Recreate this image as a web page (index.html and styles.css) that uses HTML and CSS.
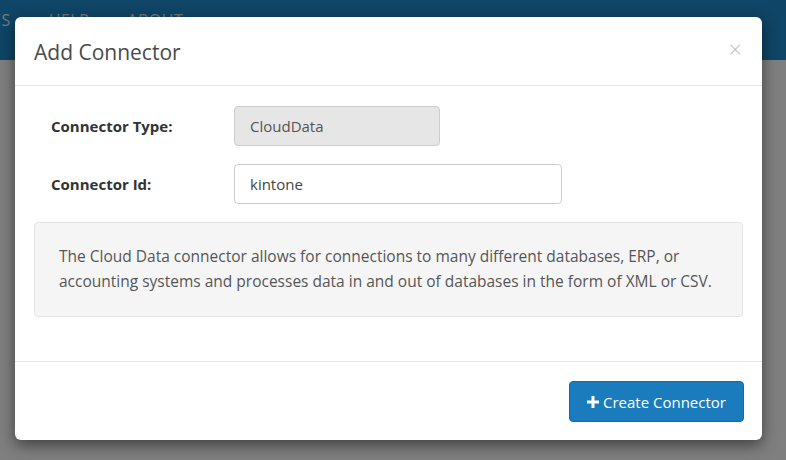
FILE: index.html
```html
<!DOCTYPE html>
<html>
<head>
<meta charset="utf-8">
<link rel="stylesheet" href="styles.css">
</head>
<body>
<div class="navbar">
  <span class="nav-item nav-es">ES</span>
  <span class="nav-item">HELP</span>
  <span class="nav-item">ABOUT</span>
</div>
<div class="page"></div>
<div class="overlay"></div>
<div class="modal">
  <div class="modal-header">
    <h4 class="modal-title">Add Connector</h4>
    <span class="close">&times;</span>
  </div>
  <div class="modal-body">
    <div class="form-row">
      <label class="form-label">Connector Type:</label>
      <div class="input input-readonly input-short">CloudData</div>
    </div>
    <div class="form-row">
      <label class="form-label">Connector Id:</label>
      <div class="input input-long">kintone</div>
    </div>
    <div class="well">
      The Cloud Data connector allows for connections to many different databases, ERP, or accounting systems and processes data in and out of databases in the form of XML or CSV.
    </div>
  </div>
  <div class="modal-footer">
    <button class="btn-primary"><svg class="plus" viewBox="0 0 12 12" width="12" height="12"><path d="M4.5 0h3v4.5H12v3H7.5V12h-3V7.5H0v-3h4.5z" fill="#fff"/></svg>Create Connector</button>
  </div>
</div>
</body>
</html>
```

FILE: styles.css
```css
html, body {
  margin: 0;
  padding: 0;
  height: 100%;
  font-family: "Open Sans", "Liberation Sans", sans-serif;
  background: #ffffff;
  overflow: hidden;
}
.navbar {
  height: 60px;
  background: #1f8acc;
  display: flex;
  align-items: flex-start;
  gap: 38px;
  margin-left: -8px;
}
.nav-item {
  color: #e6f0f8;
  font-size: 16px;
  padding-top: 9px;
  letter-spacing: 0.5px;
}
.page {
  height: 400px;
  background: #fff;
}
.overlay {
  position: absolute;
  inset: 0;
  background: rgba(0, 0, 0, 0.5);
}
.modal {
  position: absolute;
  left: 15px;
  top: 17px;
  width: 747px;
  height: 423px;
  background: #fff;
  border-radius: 6px;
  box-shadow: 0 5px 15px rgba(0, 0, 0, 0.5);
  display: flex;
  flex-direction: column;
}
.modal-header {
  height: 69px;
  flex: none;
  border-bottom: 1px solid #e5e5e5;
  display: flex;
  align-items: center;
  padding: 2px 19px 0 19px;
  box-sizing: border-box;
}
.modal-title {
  margin: 0;
  flex: 1;
  font-size: 21px;
  font-weight: 400;
  color: #4a4a4a;
}
.close {
  color: #c4c4c4;
  font-size: 24px;
  font-weight: 300;
  line-height: 1;
  margin-top: -6px;
  margin-right: 1px;
}
.modal-body {
  flex: none;
  padding: 20px 19px 0 19px;
  height: 276px;
  box-sizing: border-box;
  border-bottom: 1px solid #e5e5e5;
}
.form-row {
  display: flex;
  align-items: center;
  margin-bottom: 18px;
}
.form-label {
  width: 200px;
  box-sizing: border-box;
  padding-left: 17px;
  font-weight: 700;
  font-size: 15px;
  color: #333;
}
.input {
  height: 40px;
  box-sizing: border-box;
  border: 1px solid #cccccc;
  border-radius: 4px;
  padding: 0 15px;
  display: flex;
  align-items: center;
  font-size: 15px;
  color: #444;
}
.input-readonly {
  background: #e6e6e6;
  color: #555;
}
.input-short { width: 206px; }
.input-long { width: 328px; }
.well {
  margin-top: 1px;
  background: #f5f5f5;
  border: 1px solid #e3e3e3;
  border-radius: 4px;
  padding: 21px 24px 21px 24px;
  height: 95px;
  box-sizing: border-box;
  font-size: 15.5px;
  line-height: 25px;
  color: #555;
}
.modal-footer {
  flex: 1;
  display: flex;
  justify-content: flex-end;
  align-items: flex-start;
  padding: 19px 18px 0 0;
}
.btn-primary {
  width: 175px;
  height: 41px;
  background: #1a7bbd;
  border: 1px solid #166aa3;
  border-radius: 4px;
  color: #fff;
  font-family: inherit;
  font-size: 15px;
  display: flex;
  align-items: center;
  justify-content: center;
  gap: 4px;
  padding: 0;
}
.plus { display: block; }
```
